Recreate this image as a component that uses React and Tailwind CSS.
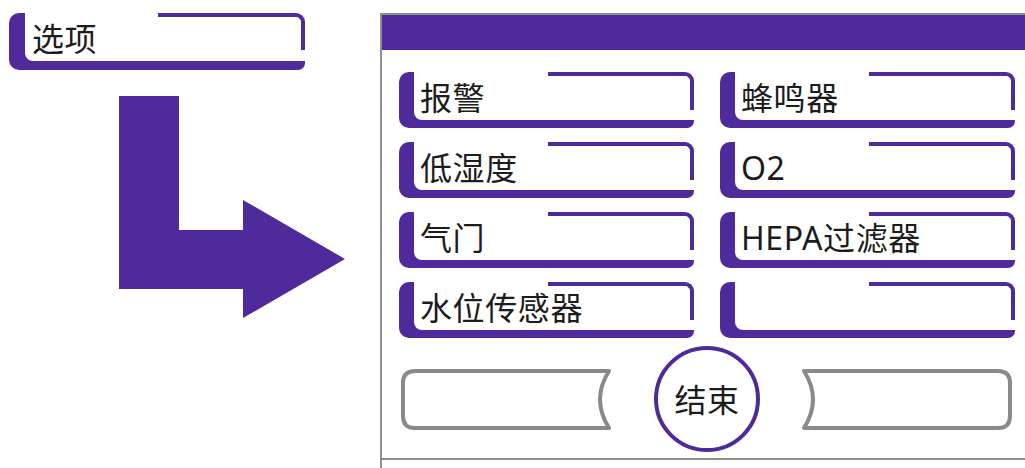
import React from 'react';

const font = "font-['Noto_Sans','Noto_Sans_CJK_SC',sans-serif]";

// purple "L" framed option button
function OptionButton({ label }) {
  return (
    <div className="flex h-[56px] w-[295px] rounded-l-[10px] rounded-br-[7px] bg-[#4f2a9b] pb-[8px] pl-[15px]">
      <div className="grid flex-1 rounded-bl-[8px] bg-white">
        <span className={`col-start-1 row-start-1 self-center whitespace-nowrap pl-[6px] pt-[4px] text-[32px] leading-none tracking-[0.6px] text-[#1c1c1c] ${font}`}>
          {label}
        </span>
        <div className="col-start-1 row-start-1 h-[38px] w-[146px] self-start justify-self-end rounded-tr-[9px] border-r-[4px] border-t-[4px] border-[#4f2a9b]" />
      </div>
    </div>
  );
}

function GrayButton({ flip }) {
  const d = flip
    ? 'M2 2 H196 Q208 2 208 14 V47 Q208 59 196 59 H2 Q20 30.5 2 2 Z'
    : 'M14 2 H208 Q190 30.5 208 59 H14 Q2 59 2 47 V14 Q2 2 14 2 Z';
  return (
    <svg width="210" height="61" viewBox="0 0 210 61" className="shrink-0">
      <path d={d} fill="white" stroke="#8a8a8a" strokeWidth="4" strokeLinejoin="round" />
    </svg>
  );
}

export default function App() {
  const items = ['报警', '蜂鸣器', '低湿度', 'O2', '气门', 'HEPA过滤器', '水位传感器', ''];

  return (
    <div className="flex h-[468px] w-[1025px] overflow-hidden bg-white">
      {/* left side: title button + arrow */}
      <div className="flex w-[380px] shrink-0 flex-col">
        <div className="ml-[9px] mt-[13px] flex h-[57px] w-[296px] rounded-l-[10px] rounded-br-[7px] bg-[#4f2a9b] pb-[9px] pl-[16px]">
          <div className="grid flex-1 rounded-bl-[8px] bg-white">
            <span className={`col-start-1 row-start-1 self-center whitespace-nowrap pl-[7px] pt-[4px] text-[32px] leading-none tracking-[0.6px] text-[#1c1c1c] ${font}`}>
              选项
            </span>
            <div className="col-start-1 row-start-1 h-[37px] w-[147px] self-start justify-self-end rounded-tr-[9px] border-r-[4px] border-t-[4px] border-[#4f2a9b]" />
          </div>
        </div>
        <svg width="226" height="222" viewBox="0 0 226 222" className="ml-[119px] mt-[26px]">
          <polygon points="0,0 60,0 60,134 124,134 124,104 226,163 124,222 124,193 0,193" fill="#4f2a9b" />
        </svg>
      </div>

      {/* panel */}
      <div className="mt-[13px] w-[660px] shrink-0 self-start border-l-2 border-t-2 border-[#8f8f8f]">
        <div className="h-[35px] bg-[#4f2a9b]" />
        <div className="grid grid-cols-[295px_295px] gap-x-[26px] gap-y-[14px] pl-[17px] pt-[22px]">
          {items.map((t, i) => (
            <OptionButton key={i} label={t} />
          ))}
        </div>
        <div className="mt-[8px] flex items-center pl-[19px]">
          <GrayButton />
          <div className="ml-[43px] flex h-[106px] w-[106px] shrink-0 items-center justify-center rounded-full border-4 border-[#4f2a9b]">
            <span className={`pt-[2px] text-[32px] leading-none tracking-[0.6px] text-[#1c1c1c] ${font}`}>结束</span>
          </div>
          <div className="ml-[42px]">
            <GrayButton flip />
          </div>
        </div>
        <div className="mt-[6px] h-[20px] border-t-2 border-[#8f8f8f]" />
      </div>
    </div>
  );
}
